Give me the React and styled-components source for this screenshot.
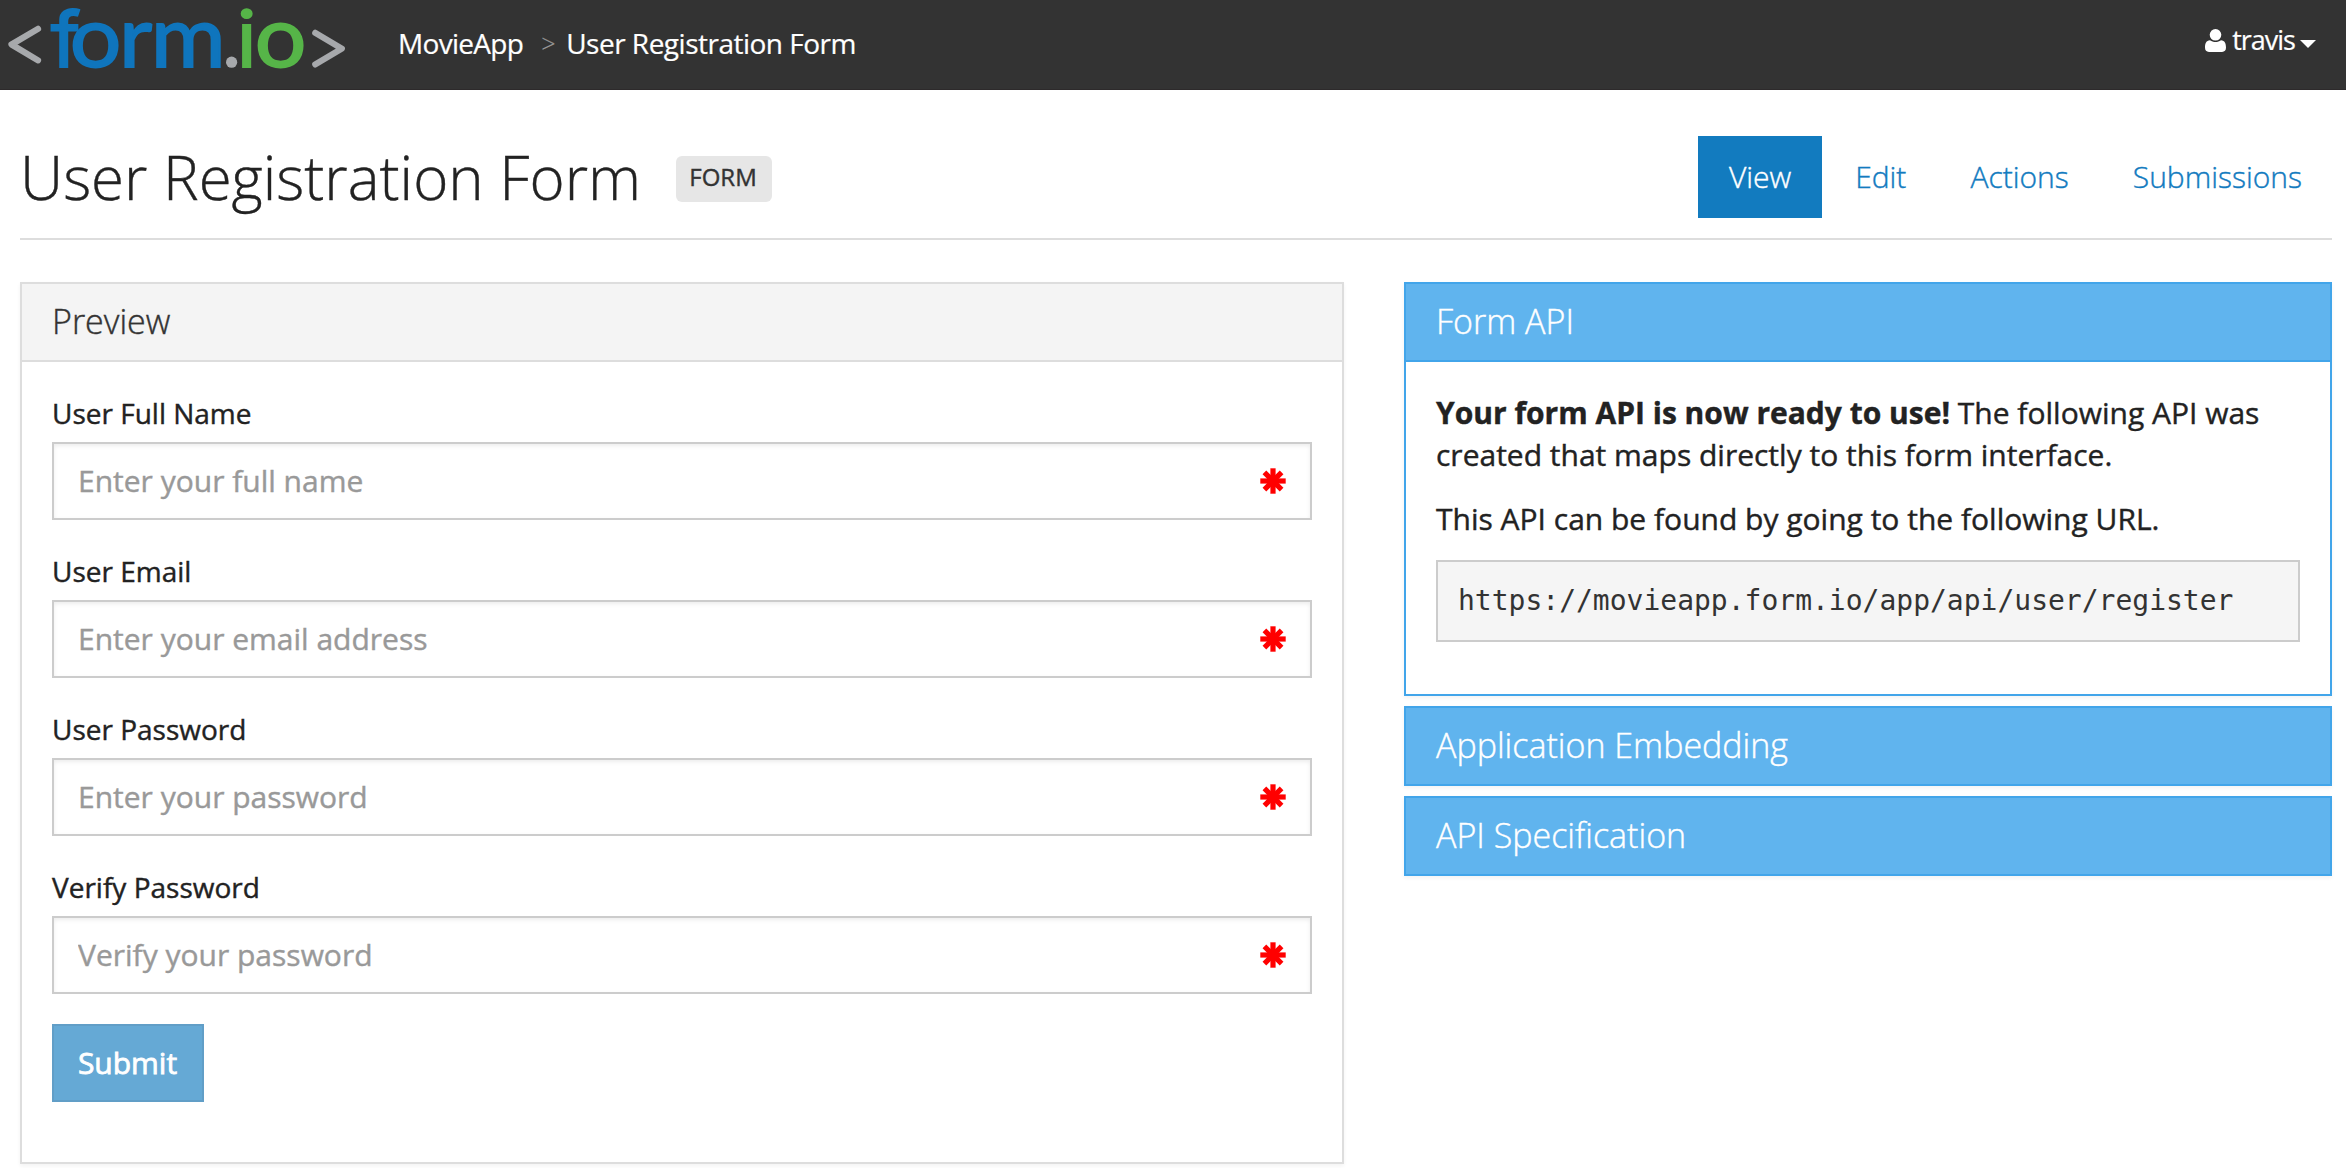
import React from "react";
import styled, { createGlobalStyle, css } from "styled-components";

const GlobalStyle = createGlobalStyle`
  *, *::before, *::after { box-sizing: border-box; }
  body {
    margin: 0;
    background: #fff;
    color: #222;
    font-family: "Open Sans", "Noto Sans", sans-serif;
    font-size: 30px;
    line-height: 42px;
    -webkit-text-stroke: 0.4px;
  }
`;

const Navbar = styled.nav`
  display: flex;
  align-items: flex-start;
  height: 90px;
  padding-right: 30px;
  background: #333;
  border-bottom: 1px solid #2d2a2b;
  color: #fff;
  -webkit-text-stroke: 0.2px;
`;

const Brand = styled.a`
  display: block;
  width: 398px;
  height: 89px;
  svg { display: block; overflow: visible; }
`;

const Breadcrumb = styled.ol`
  display: flex;
  flex: 1;
  margin: 0;
  padding: 23px 0 0;
  list-style: none;
  font-size: 28px;
  line-height: 40px;
`;

const Crumb = styled.li`
  white-space: nowrap;
  letter-spacing: ${(p) => p.$spacing};
`;

const Separator = styled.li`
  width: 43px;
  padding-left: 18px;
  color: #999;
  font-size: 25px;
  font-weight: 300;
`;

const UserMenu = styled.a`
  display: flex;
  padding-top: 20px;
  font-size: 27px;
  line-height: 40px;
  letter-spacing: -1px;
`;

const UserIcon = styled.svg`
  width: 21px;
  height: 23px;
  margin: 9px 6px 0 0;
  fill: #fff;
`;

const Caret = styled.span`
  margin: 20px 0 0 5px;
  height: 0;
  border: 8px solid transparent;
  border-top-color: #fff;
  border-bottom: 0;
`;

const PageHeader = styled.header`
  display: flex;
  align-items: flex-start;
  height: 150px;
  margin: 0 14px 42px 20px;
  border-bottom: 2px solid #ddd;
`;

const Title = styled.h1`
  margin: 54px 0 0;
  font-size: 60px;
  font-weight: 300;
  line-height: 66px;
  white-space: nowrap;
`;

const Badge = styled.span`
  width: 96px;
  height: 46px;
  margin: 66px auto 0 35px;
  padding-right: 2px;
  border-radius: 6px;
  background: #e6e6e6;
  color: #333;
  font-size: 24px;
  line-height: 41px;
  text-align: center;
`;

const Tabs = styled.div`
  display: flex;
  gap: 2px;
  margin: 46px -1px 0 0;
`;

const Tab = styled.a`
  padding: 19px 31px 20px;
  font-weight: 300;
  line-height: 43px;
  color: #127bbf;
  ${(p) => p.$active && css`
    background: #127bbf;
    color: #fff;
  `}
`;

const Columns = styled.main`
  display: grid;
  grid-template-columns: 1324px 928px;
  column-gap: 60px;
  align-items: start;
  padding-left: 20px;
  height: 886px;
`;

const Stack = styled.div`
  display: flex;
  flex-direction: column;
  gap: 10px;
`;

const Panel = styled.section`
  border: 2px solid ${(p) => (p.$info ? "#42a5ea" : "#ddd")};
  box-shadow: 0 2px 4px rgba(0, 0, 0, 0.05);
`;

const PanelHeading = styled.h3`
  margin: 0;
  height: 76px;
  padding: 19px 30px;
  background: ${(p) => (p.$info ? "#60b4ee" : "#f4f4f4")};
  color: ${(p) => (p.$info ? "#fff" : "#333")};
  font-size: 34px;
  font-weight: 300;
  line-height: 37px;
`;

const PanelBody = styled.div`
  padding: 30px 30px ${(p) => p.$bottom}px;
  border-top: 2px solid ${(p) => (p.$info ? "#42a5ea" : "#ddd")};
`;

const Field = styled.div`
  margin-bottom: 30px;
`;

const Label = styled.label`
  display: block;
  padding-top: 1px;
  margin-bottom: 9px;
  font-size: 28px;
  line-height: 40px;
`;

const InputBox = styled.div`
  display: flex;
  align-items: center;
  height: 78px;
  padding: 0 24px;
  border: 2px solid #ccc;
  box-shadow: inset 0 2px 4px rgba(0, 0, 0, 0.075);
`;

const Input = styled.input`
  flex: 1;
  height: 74px;
  padding: 0 0 2px;
  border: 0;
  outline: 0;
  background: transparent;
  font: inherit;
  &::placeholder { color: #999; opacity: 1; -webkit-text-stroke: 0.4px; }
`;

const Submit = styled.button`
  display: block;
  width: 152px;
  height: 78px;
  padding: 0 1px 1px 0;
  border: 2px solid #619ec7;
  background: #65a9d5;
  color: #fff;
  font: inherit;
  -webkit-text-stroke: 0.8px;
`;

const Paragraph = styled.p`
  margin: 0 0 ${(p) => p.$gap}px;
`;

const Url = styled.pre`
  height: 82px;
  margin: 0;
  padding: 19px 20px;
  border: 2px solid #ccc;
  background: #f5f5f5;
  color: #333;
  font-family: "DejaVu Sans Mono", monospace;
  font-size: 28px;
  line-height: 40px;
  -webkit-text-stroke: 0;
`;

const Logo = () => (
  <svg width="360" height="89" viewBox="0 0 360 89" fontFamily="Lato, sans-serif" fontSize="86">
    <g fill="none" stroke="#a7a9ac" strokeWidth="6.2" strokeLinecap="round" strokeLinejoin="round">
      <polyline points="38,28.8 11.5,44.5 38,60.3" />
      <polyline points="315.3,32.8 341.8,48.6 315.3,64.4" />
    </g>
    <g transform="scale(1.06 1)" strokeWidth="1.8">
      <text x="48 65.8 112.2 142.2" y="67" fill="#0f75bd" stroke="#0f75bd">
        <tspan fontFamily="Inter, sans-serif" fontSize="76">f</tspan>orm
      </text>
      <text x="223.3 240.4" y="67" fill="#56b548" stroke="#56b548">
        <tspan fontFamily="Inter, sans-serif" fontSize="77">i</tspan>o
      </text>
    </g>
    <circle cx="231.6" cy="62.2" r="5.6" fill="#a7a9ac" />
  </svg>
);

const Asterisk = () => (
  <svg width="26" height="26" viewBox="-13 -13 26 26" stroke="#f00" strokeWidth="5.2">
    <line x1="0" y1="-12.7" x2="0" y2="12.7" />
    <line x1="-12.7" y1="0" x2="12.7" y2="0" />
    <line x1="-8.6" y1="-8.6" x2="8.6" y2="8.6" />
    <line x1="-8.6" y1="8.6" x2="8.6" y2="-8.6" />
  </svg>
);

const fields = [
  { id: "name", label: "User Full Name", placeholder: "Enter your full name" },
  { id: "email", label: "User Email", placeholder: "Enter your email address" },
  { id: "password", label: "User Password", placeholder: "Enter your password", type: "password" },
  { id: "verify", label: "Verify Password", placeholder: "Verify your password", type: "password" },
];

const tabs = ["View", "Edit", "Actions", "Submissions"];

export default function App() {
  return (
    <>
      <GlobalStyle />
      <Navbar>
        <Brand><Logo /></Brand>
        <Breadcrumb>
          <Crumb $spacing="-0.7px">MovieApp</Crumb>
          <Separator>&gt;</Separator>
          <Crumb $spacing="-0.5px">User Registration Form</Crumb>
        </Breadcrumb>
        <UserMenu>
          <UserIcon viewBox="0 0 21 23">
            <path d="M5 11.2C1.2 11.4 0 14.5 0 18.6C0 21.5 1.4 23 4 23H17C19.6 23 21 21.5 21 18.6C21 14.5 19.8 11.4 16 11.2C12.8 13.6 8.2 13.6 5 11.2Z" />
            <circle cx="10.5" cy="5.8" r="5.8" />
          </UserIcon>
          travis
          <Caret />
        </UserMenu>
      </Navbar>
      <PageHeader>
        <Title>User Registration Form</Title>
        <Badge>FORM</Badge>
        <Tabs>
          {tabs.map((name) => (
            <Tab key={name} $active={name === "View"}>{name}</Tab>
          ))}
        </Tabs>
      </PageHeader>
      <Columns>
        <Panel>
          <PanelHeading>Preview</PanelHeading>
          <PanelBody $bottom={60}>
            {fields.map((f) => (
              <Field key={f.id}>
                <Label htmlFor={f.id}>{f.label}</Label>
                <InputBox>
                  <Input id={f.id} type={f.type || "text"} placeholder={f.placeholder} />
                  <Asterisk />
                </InputBox>
              </Field>
            ))}
            <Submit>Submit</Submit>
          </PanelBody>
        </Panel>
        <Stack>
          <Panel $info>
            <PanelHeading $info>Form API</PanelHeading>
            <PanelBody $info $bottom={52}>
              <Paragraph $gap={22}>
                <strong>Your form API is now ready to use!</strong> The following API was created
                that maps directly to this form interface.
              </Paragraph>
              <Paragraph $gap={20}>This API can be found by going to the following URL.</Paragraph>
              <Url>https://movieapp.form.io/app/api/user/register</Url>
            </PanelBody>
          </Panel>
          <Panel $info>
            <PanelHeading $info>Application Embedding</PanelHeading>
          </Panel>
          <Panel $info>
            <PanelHeading $info>API Specification</PanelHeading>
          </Panel>
        </Stack>
      </Columns>
    </>
  );
}
